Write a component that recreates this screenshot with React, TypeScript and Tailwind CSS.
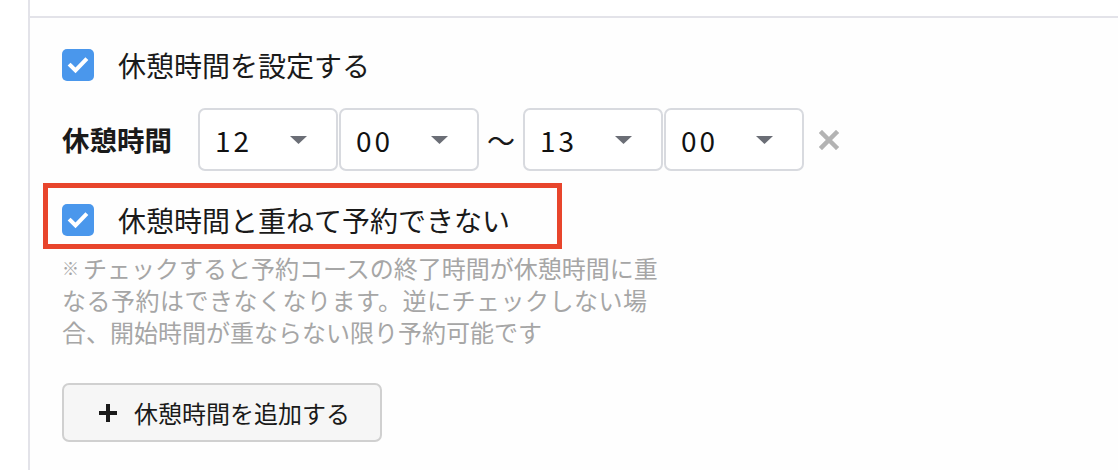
import React from "react";

const font = { fontFamily: '"Noto Sans CJK JP", "Noto Sans", sans-serif' };

function Check() {
  return (
    <div className="flex h-[32px] w-[32px] shrink-0 items-center justify-center rounded-[5px] bg-[#4a97ec]">
      <svg width="32" height="32" viewBox="0 0 32 32">
        <path d="M8.5 16.5 L13.5 21.5 L23.5 11" fill="none" stroke="#fff" strokeWidth="4" strokeLinecap="square" strokeLinejoin="miter" />
      </svg>
    </div>
  );
}

function Select({ value }: { value: string }) {
  return (
    <div className="flex h-[63px] w-[140px] items-center justify-between rounded-[7px] border-2 border-[#d8dadf] bg-white pl-[15px] pr-[29px]">
      <span className="text-[28px] leading-none tracking-[3px] text-[#111]">{value}</span>
      <svg width="17" height="8" viewBox="0 0 17 8">
        <path d="M0 0 H17 L8.5 8 Z" fill="#6b6e76" />
      </svg>
    </div>
  );
}

export default function App() {
  return (
    <div className="h-[470px] w-[1118px] overflow-hidden bg-white" style={font}>
      <div className="ml-[28px] h-[16px] border-l-2 border-[#e3e3e9]" />
      <div className="relative ml-[28px] h-[454px] border-l-2 border-t-2 border-[#e3e3e9] bg-[#fefefe] pl-[32px] pt-[31px]">
        <div className="flex h-[32px] items-center gap-[24px]">
          <Check />
          <span className="text-[28px] leading-none text-[#1a1a1a]">休憩時間を設定する</span>
        </div>

        <div className="mt-[27px] flex items-center">
          <span className="mr-[26px] w-[110px] text-[27.5px] font-bold leading-none text-[#1a1a1a]">休憩時間</span>
          <div className="flex items-center gap-[1px]">
            <Select value="12" />
            <Select value="00" />
          </div>
          <span className="mx-[8px] w-[28px] text-center text-[28px] leading-none text-[#1a1a1a]">〜</span>
          <div className="flex items-center gap-[1px]">
            <Select value="13" />
            <Select value="00" />
          </div>
          <svg className="ml-[15px]" width="20" height="20" viewBox="0 0 20 20">
            <path d="M3 3 L17 17 M17 3 L3 17" stroke="#b3b3b3" strokeWidth="4.5" strokeLinecap="square" />
          </svg>
        </div>

        <div className="mt-[33px] flex h-[32px] items-center gap-[24px]">
          <Check />
          <span className="text-[28px] leading-none text-[#1a1a1a]">休憩時間と重ねて予約できない</span>
        </div>

        <div className="mt-[16px] flex flex-col text-[24px] leading-[32px] text-[#a6a6a6]">
          <div className="flex items-center whitespace-nowrap">
            <span className="mr-[4px] text-[17px] font-bold leading-[32px]">※</span>
            <span>チェックすると予約コースの終了時間が休憩時間に重</span>
          </div>
          <div className="whitespace-nowrap tracking-[0.5px]">なる予約はできなくなります。逆にチェックしない場</div>
          <div className="whitespace-nowrap">合、開始時間が重ならない限り予約可能です</div>
        </div>

        <button className="mt-[35px] flex h-[59px] w-[320px] items-center rounded-[7px] border-2 border-[#d0d0d0] bg-[#f6f6f6] pl-[34px]">
          <svg width="20" height="20" viewBox="0 0 20 20">
            <path d="M10 1 V19 M1 10 H19" stroke="#1a1a1a" strokeWidth="4" />
          </svg>
          <span className="ml-[16px] text-[24px] leading-none text-[#1a1a1a]">休憩時間を追加する</span>
        </button>

        <div className="pointer-events-none absolute left-[13px] top-[165px] h-[66px] w-[519px] border-[5px] border-[#e8452c]" />
      </div>
    </div>
  );
}
